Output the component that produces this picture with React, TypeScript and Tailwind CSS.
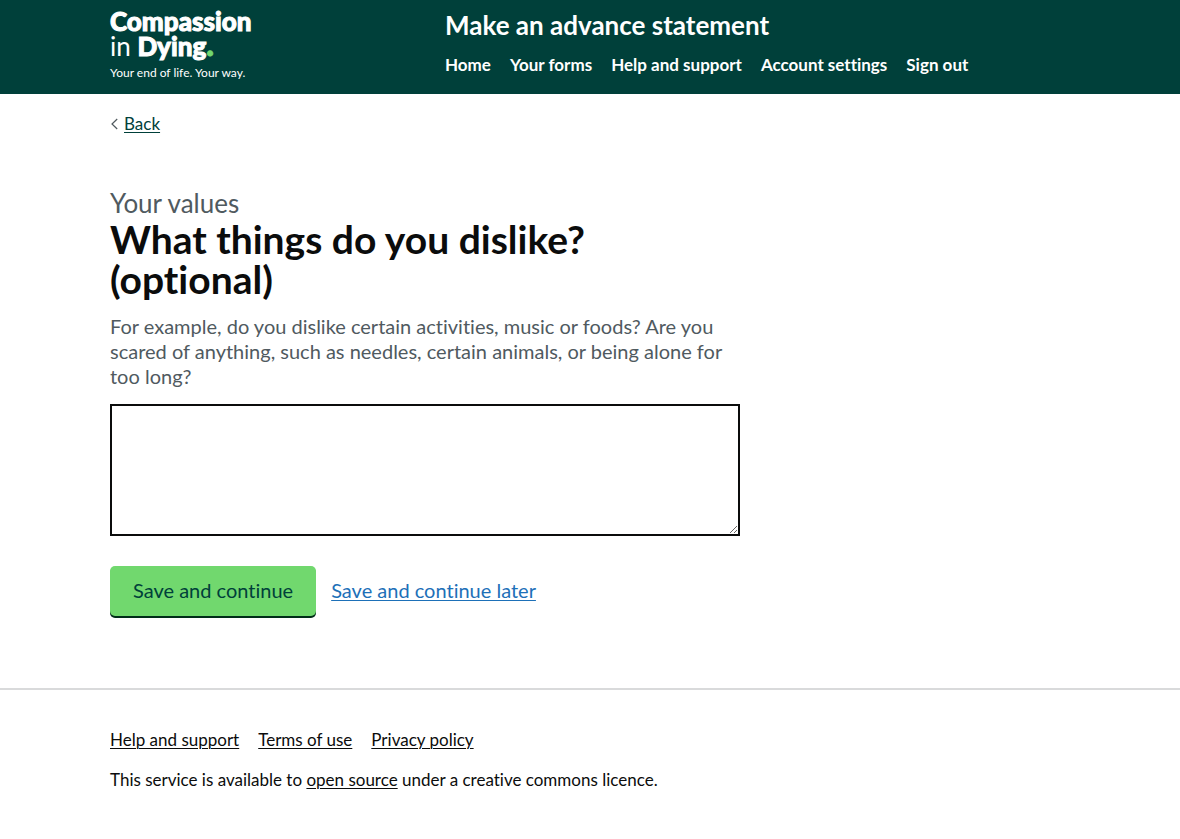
const navItems = ["Home", "Your forms", "Help and support", "Account settings", "Sign out"];
const footerItems = ["Help and support", "Terms of use", "Privacy policy"];

function Logo() {
  return (
    <a href="#" className="block w-fit text-white">
      <span className="block text-[26px] leading-[25px] font-black [-webkit-text-stroke:1px]">Compassion</span>
      <span className="block h-[25px] text-[26px] leading-[25px]">
        in <span className="font-black [-webkit-text-stroke:1px]">Dying<span className="text-[32px] leading-[10px] text-[#71d86e]">.</span></span>
      </span>
      <span className="mt-[6px] block text-xs leading-4">Your end of life. Your way.</span>
    </a>
  );
}

function Header() {
  return (
    <header className="bg-[#00403a] text-white">
      <div className="mx-auto grid max-w-[960px] grid-cols-3 gap-x-[30px] pt-[9px] pb-[13px]">
        <Logo />
        <div className="col-span-2 pl-[5px]">
          <a href="#" className="block text-[26px] leading-8 font-bold">
            Make an advance statement
          </a>
          <nav aria-label="Main" className="mt-3">
            <ul className="flex flex-wrap gap-x-[19px]">
              {navItems.map((item) => (
                <li key={item}>
                  <a href="#" className="text-[17px] leading-6 font-bold">{item}</a>
                </li>
              ))}
            </ul>
          </nav>
        </div>
      </div>
    </header>
  );
}

export default function App() {
  return (
    <div className="bg-white font-['Lato',sans-serif] text-[#0b0c0c] [font-variant-ligatures:no-common-ligatures]">
      <Header />
      <div className="mx-auto max-w-[960px]">
        <a href="#" className="mt-5 flex w-fit items-center gap-[6px] text-[17px] leading-5 text-[#00403a]">
          <svg width="8" height="12" viewBox="0 0 8 12" fill="none" stroke="#505a5f" strokeWidth="1.2" aria-hidden="true">
            <path d="M7.2 1 L2 6 L7.2 11" />
          </svg>
          <span className="underline decoration-1 underline-offset-2">Back</span>
        </a>
        <main className="pt-[54px] pb-[72px]">
          <form className="max-w-[630px]" onSubmit={(event) => event.preventDefault()}>
            <span className="block text-[26px] leading-[31px] text-[#505a5f]">Your values</span>
            <h1 className="max-w-[520px] text-[39px] leading-10 font-bold">
              <label htmlFor="dislikes">What things do you dislike? (optional)</label>
            </h1>
            <p id="dislikes-hint" className="mt-[15px] text-[20px] leading-[25px] text-[#505a5f]">
              For example, do you dislike certain activities, music or foods? Are you scared of anything, such as needles, certain animals, or being alone for too long?
            </p>
            <textarea
              id="dislikes"
              name="dislikes"
              rows={5}
              aria-describedby="dislikes-hint"
              className="mt-[15px] block w-full resize-y border-2 border-[#0b0c0c] bg-white p-[5px] text-[20px] leading-[25px] h-[132px]"
            />
            <div className="mt-[30px] flex flex-wrap items-start gap-[15px]">
              <button
                type="submit"
                className="rounded-[5px] bg-[#71d86e] px-[23px] pt-3 pb-[13px] text-[20px] leading-[25px] text-[#00403a] shadow-[0_2px_0_#002d18]"
              >
                Save and continue
              </button>
              <a href="#" className="pt-3 text-[20px] leading-[25px] text-[#1d70b8] underline decoration-1 underline-offset-2">
                Save and continue later
              </a>
            </div>
          </form>
        </main>
      </div>
      <footer className="border-t-2 border-[#d9dadb] text-[17px] leading-5">
        <div className="mx-auto max-w-[960px] pt-10 pb-12">
          <ul className="flex flex-wrap gap-x-[19px]">
            {footerItems.map((item) => (
              <li key={item}>
                <a href="#" className="underline decoration-1 underline-offset-2">{item}</a>
              </li>
            ))}
          </ul>
          <p className="mt-5">
            This service is available to{" "}
            <a href="#" className="underline decoration-1 underline-offset-2">open source</a> under a creative commons licence.
          </p>
        </div>
      </footer>
    </div>
  );
}
